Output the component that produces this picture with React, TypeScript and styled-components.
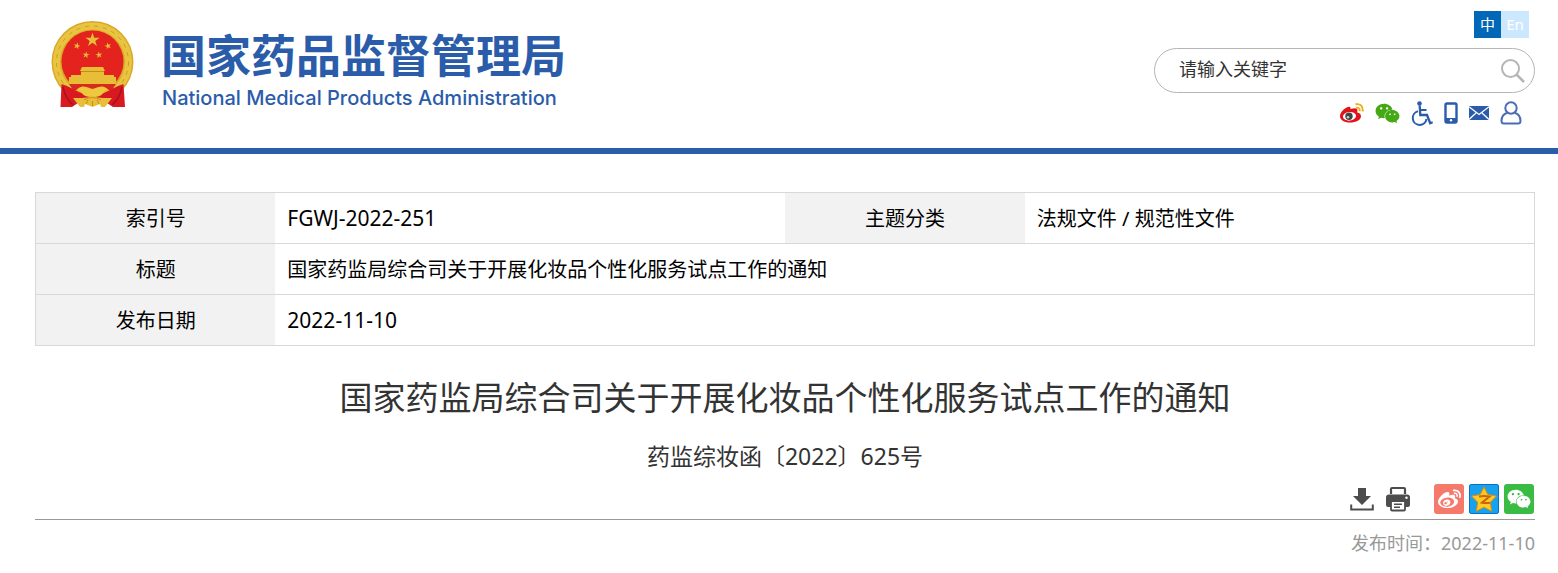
import React from "react";
import styled, { createGlobalStyle } from "styled-components";
import { FaWeixin, FaWeibo } from "react-icons/fa";

const BLUE = "#2a5caa";

const GlobalStyle = createGlobalStyle`
  * { box-sizing: border-box; }
  body {
    margin: 0;
    background: #fff;
    color: #000;
    font-family: "Noto Sans", "Noto Sans CJK SC", sans-serif;
  }
`;

const Header = styled.header`
  display: flex;
  justify-content: space-between;
  align-items: flex-start;
  height: 154px;
  padding: 0 23px 0 51px;
  border-bottom: 6px solid ${BLUE};
`;

const Brand = styled.a`
  display: flex;
  gap: 25px;
  padding-top: 20px;
  color: ${BLUE};
  text-decoration: none;
`;

const BrandText = styled.span`
  display: flex;
  flex-direction: column;
  padding-top: 8px;
`;

const BrandName = styled.span`
  font: 700 45px/52px "Noto Sans CJK SC", sans-serif;
  white-space: nowrap;
`;

const BrandSub = styled.span`
  padding: 3px 0 0 1px;
  font: 500 20px/30px Inter, sans-serif;
  white-space: nowrap;
`;

const Tools = styled.div`
  display: flex;
  flex-direction: column;
  align-items: flex-end;
  width: 381px;
  padding-top: 11px;
`;

const Languages = styled.nav`
  display: flex;
  margin-right: 6px;
`;

const Language = styled.a<{ $active?: boolean }>`
  width: ${(p) => (p.$active ? 27 : 28)}px;
  background: ${(p) => (p.$active ? "#0068b7" : "#cce8ff")};
  color: #fff;
  font-size: 15px;
  line-height: 26px;
  padding-bottom: 1px;
  text-align: center;
  text-decoration: none;
`;

const Search = styled.form`
  display: flex;
  align-items: center;
  width: 100%;
  height: 45px;
  margin-top: 10px;
  padding: 0 8px 0 24px;
  border: 1px solid #b5b5b5;
  border-radius: 23px;
`;

const SearchInput = styled.input`
  flex: 1;
  min-width: 0;
  padding: 0 0 2px;
  border: 0;
  outline: 0;
  background: none;
  font: 18px/27px "Noto Sans", "Noto Sans CJK SC", sans-serif;
  &::placeholder { color: #333; opacity: 1; }
`;

const IconButton = styled.button`
  display: flex;
  padding: 0;
  border: 0;
  background: none;
  color: #4d4d4d;
  cursor: pointer;
`;

const QuickLinks = styled.nav`
  display: flex;
  align-items: center;
  gap: 11px;
  height: 26px;
  margin: 7px 13px 0 0;
`;

const IconLink = styled.a`
  display: flex;
  color: ${BLUE};
`;

const Main = styled.main`
  padding: 38px 23px 20px 35px;
`;

const InfoTable = styled.table`
  width: 100%;
  table-layout: fixed;
  border-collapse: collapse;
  border: 1px solid #d8d8d8;
  font-size: 20px;
  line-height: 30px;
`;

const InfoRow = styled.tr`
  height: 51px;
  border-bottom: 1px solid #d8d8d8;
`;

const Label = styled.th`
  width: 16%;
  padding: 2px 0 0;
  background: #f2f2f2;
  font-weight: 400;
  text-align: center;
`;

const Value = styled.td<{ $latin?: boolean }>`
  padding: ${(p) => (p.$latin ? 0 : 2)}px 12px 0;
  font-size: ${(p) => (p.$latin ? 21 : 20)}px;
`;

const Title = styled.h1`
  margin: 27px 0 0;
  color: #333;
  font-size: 33px;
  font-weight: 400;
  line-height: 50px;
  text-align: center;
`;

const DocNumber = styled.p`
  margin: 15px 0 0;
  color: #333;
  font-size: 23px;
  line-height: 36px;
  text-align: center;
`;

const ActionBar = styled.div`
  display: flex;
  justify-content: flex-end;
  align-items: center;
  gap: 24px;
  margin-top: 10px;
  padding: 0 1px 5px 0;
  border-bottom: 1px solid #999;
`;

const Group = styled.div<{ $gap: number }>`
  display: flex;
  align-items: center;
  gap: ${(p) => p.$gap}px;
`;

const ShareLink = styled.a<{ $bg: string }>`
  display: flex;
  align-items: center;
  justify-content: center;
  width: 30px;
  height: 30px;
  border-radius: 3px;
  background: ${(p) => p.$bg};
  color: #fff;
`;

const Published = styled.p`
  margin: 10px 0 0;
  color: #999;
  font-size: 18px;
  line-height: 27px;
  text-align: right;
`;

const STAR = "M0-10 2.3-3.1H9.5L3.7 1.2 5.9 8.1 0 3.8-5.9 8.1-3.7 1.2-9.5-3.1H-2.3Z";

const Emblem = () => (
  <svg width="85" height="90" viewBox="0 0 85 90" aria-hidden="true">
    <circle cx="41.500" cy="42" r="41" fill="#d9a826" />
    <circle cx="41.500" cy="42" r="36" fill="none" stroke="#e9c441" strokeWidth="7" />
    <circle cx="41.500" cy="42" r="36" fill="none" stroke="#cf9c22" strokeWidth="1" strokeDasharray="4 5" />
    <circle cx="41.500" cy="41.500" r="31" fill="#e4231f" />
    <g fill="#e8bd38">
      <path d={STAR} transform="translate(41.500 20) scale(.75)" />
      <path d={STAR} transform="translate(26 26) rotate(15) scale(.36)" />
      <path d={STAR} transform="translate(57 26) rotate(-15) scale(.36)" />
      <path d={STAR} transform="translate(35 35) rotate(8) scale(.36)" />
      <path d={STAR} transform="translate(48 35) rotate(-8) scale(.36)" />
      <path d="M31 47h21l2 4H29ZM30 50h23v5h10v2h2v7H18v-7h2v-2h10Z" />
    </g>
    <path d="M30 51.500h23" stroke="#c88d17" strokeWidth="1" />
    <path d="M18 64h47l-4 6H22Z" fill="#d92a1e" />
    <path d="M10.500 64 16 66l12 6 14 6 13-6 12-6 5.500-2L74 87H62l-6-4H27l-6 4H9.500Z" fill="#d91922" />
    <path d="M12 67q2 11 10 18M71 67q-2 11-10 18" fill="none" stroke="#a8121a" strokeWidth="1.500" />
    <path d="M25.500 70q4-5 10-3l6 2 6-2q6-2 10 3-5 1-7 5-4 3-9 1-5 2-9-1-2-4-7-5Z" fill="#efc83f" />
    <path d="M22 78h9q5 0 10.500-2 5.500 2 10.500 2h9l-7 9h-4l-1-3-7.500 3-7.500-3-1 3h-4Z" fill="#e9bf3a" />
    <path d="M33 80q8-5 17 0M35 84l2-4M41.500 86v-5M48 84l-2-4" fill="none" stroke="#c88d17" strokeWidth="1" />
  </svg>
);

const SearchIcon = () => (
  <svg width="26" height="26" viewBox="0 0 26 26" fill="none" stroke="#b5b5b5" strokeWidth="2">
    <circle cx="10.500" cy="10.500" r="8.500" />
    <path d="m16.500 16.500 7.500 7.500" strokeWidth="2.500" />
  </svg>
);

const WeiboIcon = () => (
  <svg width="24" height="20" viewBox="0 0 24 20">
    <path d="M8 4q3-1.200 2.500 2 7-2 7 1.200 0 1-.5 2 4 1 4 4C21 17 16 19.500 10 19.500S0 17 0 13C0 10 4 5 8 4Z" fill="#e0121a" />
    <ellipse cx="9.500" cy="13.300" rx="6.600" ry="4.300" fill="#fff" transform="rotate(-6 9.500 13.300)" />
    <circle cx="9" cy="13.300" r="3.700" fill="#444" />
    <circle cx="8" cy="14.300" r="1.300" fill="#ccc" />
    <path d="M15.500 1.300Q23-.2 22.800 8.500M16 4.700q4-.5 3.700 3.500" fill="none" stroke="#eeae16" strokeWidth="1.900" />
  </svg>
);

const WheelchairIcon = () => (
  <svg width="22" height="25" viewBox="0 0 22 25" fill="none" stroke={BLUE}>
    <circle cx="8.500" cy="2.500" r="2.300" fill={BLUE} stroke="none" />
    <path d="M8.700 4.500 9.300 14H16l3.200 8.200 2.500-1" strokeWidth="2.300" />
    <path d="M9 9h6.500" strokeWidth="2" />
    <path d="M7 10.300A6.900 6.900 0 1 0 15.500 18" strokeWidth="2" />
  </svg>
);

const PhoneIcon = () => (
  <svg width="14" height="22" viewBox="0 0 14 22">
    <rect x="1.500" y="1.500" width="11" height="19" rx="1.500" fill="#fff" stroke={BLUE} strokeWidth="2.400" />
    <path d="M1 16h12v4H1Z" fill={BLUE} />
    <circle cx="7" cy="18.300" r="1.200" fill="#fff" />
  </svg>
);

const MailIcon = () => (
  <svg width="20" height="14" viewBox="0 0 20 14">
    <path d="M0 0h20v14H0Z" fill={BLUE} />
    <path d="m0 .8 10 7.700L20 .8M0 13.500l7-6.500M20 13.500 13 7" fill="none" stroke="#fff" strokeWidth="1.300" />
  </svg>
);

const UserIcon = () => (
  <svg width="22" height="24" viewBox="0 0 22 24" fill="none" stroke="#4a6db5" strokeWidth="2">
    <circle cx="11" cy="7" r="5.700" />
    <path d="M7.500 11.800C3.500 13 1.500 16 1.500 20q0 2.500 2.500 2.500h14q2.500 0 2.500-2.500c0-4-2-7-6-8.200" />
  </svg>
);

const DownloadIcon = () => (
  <svg width="24" height="24" viewBox="0 0 24 24" fill="#4d4d4d">
    <path d="M8 1h8v8h5l-9 9-9-9h5Z" />
    <path d="M1.200 17.500v5h21.600v-5" fill="none" stroke="#4d4d4d" strokeWidth="2" />
  </svg>
);

const PrintIcon = () => (
  <svg width="24" height="26" viewBox="0 0 24 26">
    <path d="M5 8V3q0-1 1-1h12q1 0 1 1v5" fill="#fff" stroke="#4d4d4d" strokeWidth="2.200" />
    <path d="M3 8.500h18q3 0 3 3V19q0 2-2 2H2q-2 0-2-2v-7.500q0-3 3-3Z" fill="#4d4d4d" />
    <circle cx="20.500" cy="11.800" r="1.200" fill="#fff" />
    <rect x="5" y="15" width="14" height="9.500" rx="1" fill="#fff" stroke="#4d4d4d" strokeWidth="1.800" />
    <path d="M8 18.200h8M8 21.300h6" stroke="#4d4d4d" strokeWidth="1.500" />
  </svg>
);

const QzoneIcon = () => (
  <svg width="30" height="30" viewBox="0 0 30 30">
    <rect x=".5" y=".5" width="29" height="29" rx="2" fill="#17a1ef" stroke="#0870c5" strokeWidth="1" />
    <path d="m15 3 3.800 7.500 8.700 1.500-6.200 6.300 1.400 9L15 23.200l-7.700 4.100 1.400-9L2.500 12l8.700-1.500Z" fill="#fdcb24" stroke="#dc8b12" strokeWidth="1" strokeLinejoin="round" />
    <path d="M10 12.500q5-1 10.500 0l-7.500 6.200q5 .8 8 0" fill="none" stroke="#c96510" strokeWidth="2" />
  </svg>
);

export default function App() {
  return (
    <>
      <GlobalStyle />
      <Header>
        <Brand href="#">
          <Emblem />
          <BrandText>
            <BrandName>国家药品监督管理局</BrandName>
            <BrandSub>National Medical Products Administration</BrandSub>
          </BrandText>
        </Brand>
        <Tools>
          <Languages>
            <Language href="#" $active>中</Language>
            <Language href="#">En</Language>
          </Languages>
          <Search role="search">
            <SearchInput type="text" aria-label="请输入关键字" placeholder="请输入关键字" />
            <IconButton type="button" aria-label="搜索"><SearchIcon /></IconButton>
          </Search>
          <QuickLinks>
            <IconLink href="#" aria-label="微博"><WeiboIcon /></IconLink>
            <IconLink href="#" aria-label="微信"><FaWeixin size={25} color="#45a815" /></IconLink>
            <IconLink href="#" aria-label="无障碍"><WheelchairIcon /></IconLink>
            <IconLink href="#" aria-label="手机版"><PhoneIcon /></IconLink>
            <IconLink href="#" aria-label="邮箱"><MailIcon /></IconLink>
            <IconLink href="#" aria-label="用户"><UserIcon /></IconLink>
          </QuickLinks>
        </Tools>
      </Header>
      <Main>
        <InfoTable>
          <colgroup>
            <col style={{ width: "16%" }} />
            <col style={{ width: "34%" }} />
            <col style={{ width: "16%" }} />
            <col />
          </colgroup>
          <tbody>
            <InfoRow>
              <Label scope="row">索引号</Label>
              <Value $latin>FGWJ-2022-251</Value>
              <Label scope="row">主题分类</Label>
              <Value>法规文件 / 规范性文件</Value>
            </InfoRow>
            <InfoRow>
              <Label scope="row">标题</Label>
              <Value colSpan={3}>国家药监局综合司关于开展化妆品个性化服务试点工作的通知</Value>
            </InfoRow>
            <InfoRow>
              <Label scope="row">发布日期</Label>
              <Value $latin colSpan={3}>2022-11-10</Value>
            </InfoRow>
          </tbody>
        </InfoTable>
        <Title>国家药监局综合司关于开展化妆品个性化服务试点工作的通知</Title>
        <DocNumber>药监综妆函〔2022〕625号</DocNumber>
        <ActionBar>
          <Group $gap={12}>
            <IconButton type="button" aria-label="下载"><DownloadIcon /></IconButton>
            <IconButton type="button" aria-label="打印"><PrintIcon /></IconButton>
          </Group>
          <Group $gap={5}>
            <ShareLink href="#" $bg="#f67a6b" aria-label="分享到微博"><FaWeibo size={23} /></ShareLink>
            <ShareLink href="#" $bg="#17a1ef" aria-label="分享到QQ空间"><QzoneIcon /></ShareLink>
            <ShareLink href="#" $bg="#3abb43" aria-label="分享到微信"><FaWeixin size={24} /></ShareLink>
          </Group>
        </ActionBar>
        <Published>发布时间：2022-11-10</Published>
      </Main>
    </>
  );
}
